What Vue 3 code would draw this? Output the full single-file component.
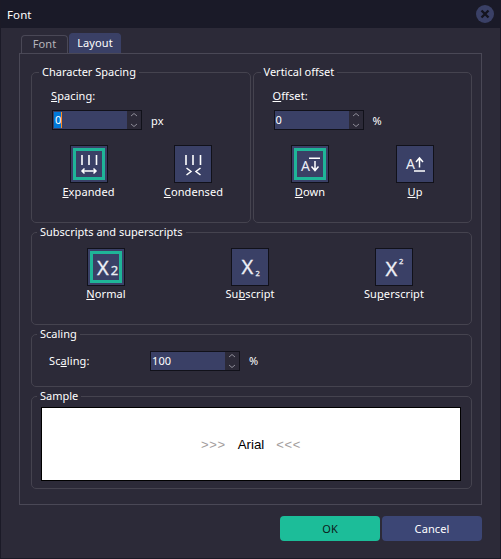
<template>
  <div class="dialog">
    <div class="titlebar">
      <span class="title">Font</span>
      <button class="close">
        <svg width="10" height="10" viewBox="0 0 10 10">
          <path d="M1.5 1.5L8.5 8.5M8.5 1.5L1.5 8.5" stroke="#14141f" stroke-width="2.4" />
        </svg>
      </button>
    </div>

    <div class="body">
      <div class="tabs">
        <div class="tab">Font</div>
        <div class="tab active">Layout</div>
      </div>

      <div class="panel">
        <div class="row-two">
          <section class="group spacing-group">
            <span class="legend shifted">Character Spacing</span>
            <div class="field-label"><u>S</u>pacing:</div>
            <div class="spin-row">
              <div class="spin">
                <div class="spin-value"><span class="selected">0</span><span class="caret"></span></div>
                <div class="spin-arrows">
                  <svg width="14" height="18" viewBox="0 0 14 18">
                    <path d="M4 5L7 2.5L10 5M4 13L7 15.5L10 13" fill="none" stroke="#8d8c98" />
                  </svg>
                </div>
              </div>
              <span class="unit">px</span>
            </div>
            <div class="icon-grid two">
              <div class="option">
                <div class="icon-btn checked">
                  <svg width="36" height="36" viewBox="1 1 36 36">
                    <path d="M12 10V20M19 10V20M26.500 10V20" stroke="#fff" stroke-width="1.600" />
                    <path d="M12 26H26M14.500 23.500L12 26L14.500 28.500M23.500 23.500L26 26L23.500 28.500" fill="none" stroke="#fff" stroke-width="1.500" />
                  </svg>
                </div>
                <span class="option-label"><u>E</u>xpanded</span>
              </div>
              <div class="option">
                <div class="icon-btn">
                  <svg width="36" height="36" viewBox="1 1 36 36">
                    <path d="M12 10V20M19 10V20M26.500 10V20" stroke="#fff" stroke-width="1.600" />
                    <path d="M12.500 23L17 26.500L12.500 30M26.500 23L22 26.500L26.500 30" fill="none" stroke="#fff" stroke-width="1.500" />
                  </svg>
                </div>
                <span class="option-label"><u>C</u>ondensed</span>
              </div>
            </div>
          </section>

          <section class="group spacing-group">
            <span class="legend shifted">Vertical offset</span>
            <div class="field-label"><u>O</u>ffset:</div>
            <div class="spin-row">
              <div class="spin">
                <div class="spin-value">0</div>
                <div class="spin-arrows">
                  <svg width="14" height="18" viewBox="0 0 14 18">
                    <path d="M4 5L7 2.500L10 5M4 13L7 15.500L10 13" fill="none" stroke="#8d8c98" />
                  </svg>
                </div>
              </div>
              <span class="unit">%</span>
            </div>
            <div class="icon-grid two">
              <div class="option">
                <div class="icon-btn checked">
                  <svg width="36" height="36" viewBox="1 1 36 36">
                    <text x="10" y="26" class="glyph" font-size="14">A</text>
                    <path d="M18 13.250H29M24 16V25M20.500 21.500L24 25.500L27.500 21.500" fill="none" stroke="#fff" stroke-width="1.500" />
                  </svg>
                </div>
                <span class="option-label"><u>D</u>own</span>
              </div>
              <div class="option">
                <div class="icon-btn">
                  <svg width="36" height="36" viewBox="1 1 36 36">
                    <text x="10" y="23.500" class="glyph" font-size="14">A</text>
                    <path d="M18 26H29M23.500 13.500V22.500M20 17L23.500 13L27 17" fill="none" stroke="#fff" stroke-width="1.500" />
                  </svg>
                </div>
                <span class="option-label"><u>U</u>p</span>
              </div>
            </div>
          </section>
        </div>

        <section class="group script-group">
          <span class="legend">Subscripts and superscripts</span>
          <div class="icon-grid three">
            <div class="option">
              <div class="icon-btn checked">
                <svg width="36" height="36" viewBox="1 1 36 36">
                  <text x="10" y="26.500" class="glyph heavy" font-size="20">X</text>
                  <text x="23.800" y="26.500" class="glyph heavy" font-size="13">2</text>
                </svg>
              </div>
              <span class="option-label"><u>N</u>ormal</span>
            </div>
            <div class="option">
              <div class="icon-btn">
                <svg width="36" height="36" viewBox="1 1 36 36">
                  <text x="10.500" y="26" class="glyph heavy" font-size="20">X</text>
                  <text x="24.500" y="28" class="glyph heavy" font-size="7.500">2</text>
                </svg>
              </div>
              <span class="option-label">Su<u>b</u>script</span>
            </div>
            <div class="option">
              <div class="icon-btn">
                <svg width="36" height="36" viewBox="1 1 36 36">
                  <text x="10.500" y="28" class="glyph heavy" font-size="20">X</text>
                  <text x="24" y="16" class="glyph heavy" font-size="7.500">2</text>
                </svg>
              </div>
              <span class="option-label">Su<u>p</u>erscript</span>
            </div>
          </div>
        </section>

        <section class="group scaling-group">
          <span class="legend">Scaling</span>
          <span class="scaling-label">Sc<u>a</u>ling:</span>
          <div class="spin">
            <div class="spin-value wide">100</div>
            <div class="spin-arrows">
              <svg width="14" height="18" viewBox="0 0 14 18">
                <path d="M4 5L7 2.500L10 5M4 13L7 15.500L10 13" fill="none" stroke="#8d8c98" />
              </svg>
            </div>
          </div>
          <span class="unit">%</span>
        </section>

        <section class="group sample-group">
          <span class="legend">Sample</span>
          <div class="sample">
            <span class="marks">&gt;&gt;&gt;</span>
            <span class="sample-text">Arial</span>
            <span class="marks">&lt;&lt;&lt;</span>
          </div>
        </section>
      </div>

      <div class="actions">
        <button class="btn ok">OK</button>
        <button class="btn cancel">Cancel</button>
      </div>
    </div>
  </div>
</template>

<script setup>
</script>

<style scoped>
.dialog {
  width: 501px;
  height: 559px;
  box-sizing: border-box;
  display: flex;
  flex-direction: column;
  background: #2c2a38;
  border: 1px solid #1b1a27;
  border-top: none;
  color: #fff;
  font-family: "Noto Sans", "DejaVu Sans", sans-serif;
  font-size: 11px;
  letter-spacing: 0.1px;
  overflow: hidden;
}

.titlebar {
  height: 28px;
  flex: none;
  display: flex;
  align-items: center;
  justify-content: space-between;
  padding: 0 6px 0 6px;
  background: #1a1a28;
}

.title {
  font-size: 11.5px;
}

.close {
  width: 18px;
  height: 18px;
  padding: 0;
  border: none;
  border-radius: 50%;
  background: #3a4066;
  display: flex;
  align-items: center;
  justify-content: center;
}

.body {
  flex: 1;
  padding: 5px 18px 0 18px;
}

.tabs {
  display: flex;
  align-items: flex-end;
  height: 20px;
  padding-left: 2px;
  gap: 1px;
}

.tab {
  width: 47px;
  height: 18px;
  box-sizing: border-box;
  border: 1px solid #4a4856;
  border-bottom: none;
  border-radius: 4px 4px 0 0;
  text-align: center;
  line-height: 16px;
  color: #b5b4ba;
}

.tab.active {
  width: 52px;
  height: 20px;
  background: #3a4066;
  color: #fff;
  line-height: 18px;
  border-color: #3a4066;
}

.panel {
  height: 452px;
  box-sizing: border-box;
  border: 1px solid #4a4856;
  padding: 18px 9px 0 11px;
  display: flex;
  flex-direction: column;
  gap: 9px;
}

.row-two {
  display: flex;
  gap: 2px;
}

.group {
  position: relative;
  box-sizing: border-box;
  border: 1px solid #45434f;
  border-radius: 5px;
}

.legend {
  position: absolute;
  left: 5px;
  top: -9px;
  padding: 0 3px;
  line-height: 15px;
  background: #2c2a38;
  white-space: nowrap;
  letter-spacing: 0;
}

.legend.shifted {
  left: 7px;
}

.spacing-group {
  width: 220px;
  height: 151px;
  padding: 15px 0 0 19px;
}

.field-label {
  line-height: 15px;
  margin-bottom: 7px;
}

.spin-row {
  display: flex;
  align-items: center;
  gap: 9px;
  margin-left: 1px;
}

.spin {
  width: 90px;
  height: 20px;
  box-sizing: border-box;
  display: flex;
  flex: none;
  border: 1px solid #11111a;
  background: #2c2a38;
}

.spin-value {
  width: 74px;
  display: flex;
  align-items: center;
  padding-left: 1px;
  box-sizing: border-box;
  background: #3a4066;
  line-height: 18px;
}

.spin-value.wide {
  width: 74px;
}

.selected {
  background: #0078d7;
  padding: 0 0 0 1px;
  line-height: 16px;
}

.caret {
  width: 1px;
  height: 16px;
  background: #ff8a20;
}

.spin-arrows {
  flex: 1;
  display: flex;
  align-items: center;
  justify-content: center;
}

.unit {
  line-height: 15px;
}

.icon-grid {
  display: grid;
  justify-items: center;
}

.icon-grid.two {
  grid-template-columns: 105px 105px;
  margin: 15px 0 0 -15px;
}

.icon-grid.three {
  grid-template-columns: repeat(3, 144px);
  margin-left: 2px;
}

.option {
  display: flex;
  flex-direction: column;
  align-items: center;
  white-space: nowrap;
}

.icon-btn {
  width: 38px;
  height: 38px;
  box-sizing: border-box;
  border: 1px solid #11111a;
  background: #3a4066;
  position: relative;
}

.icon-btn svg {
  display: block;
}

.icon-btn.checked::after {
  content: "";
  position: absolute;
  inset: 2px;
  border: 3px solid #1fb598;
}

.option-label {
  line-height: 15px;
  margin-top: 1px;
}

.script-group .option-label {
  margin-top: 0;
}

.glyph {
  fill: #eceef5;
  font-family: "Noto Sans", "DejaVu Sans", sans-serif;
}

.glyph.heavy {
  stroke: #eceef5;
  stroke-width: 0.3px;
}

.script-group {
  height: 93px;
  padding-top: 15px;
}

.scaling-group {
  height: 53px;
  display: flex;
  align-items: center;
  padding: 0 0 0 17px;
}

.scaling-label {
  width: 101px;
  flex: none;
}

.scaling-group .spin {
  margin-right: 9px;
}

.sample-group {
  height: 93px;
  padding: 10px 0 0 9px;
}

.sample {
  width: 420px;
  height: 74px;
  box-sizing: border-box;
  border: 1px solid #000;
  background: #fff;
  display: flex;
  align-items: center;
  justify-content: center;
  gap: 12px;
  font-family: "Liberation Sans", Arial, sans-serif;
  letter-spacing: 0;
}

.marks {
  color: #a39d9d;
  font-size: 13px;
  letter-spacing: 0.6px;
}

.sample-text {
  color: #000;
  font-size: 13.33px;
}

.actions {
  display: flex;
  justify-content: flex-end;
  gap: 2px;
  margin-top: 11px;
}

.btn {
  width: 100px;
  height: 25px;
  padding: 0;
  border: none;
  border-radius: 4px;
  font-family: inherit;
  font-size: 11px;
  letter-spacing: 0.1px;
}

.ok {
  background: #1cbd99;
  color: #0d1a1a;
}

.cancel {
  background: #3c4675;
  color: #fff;
}
</style>

<style>
html,
body {
  margin: 0;
  background: #2c2a38;
}
</style>
